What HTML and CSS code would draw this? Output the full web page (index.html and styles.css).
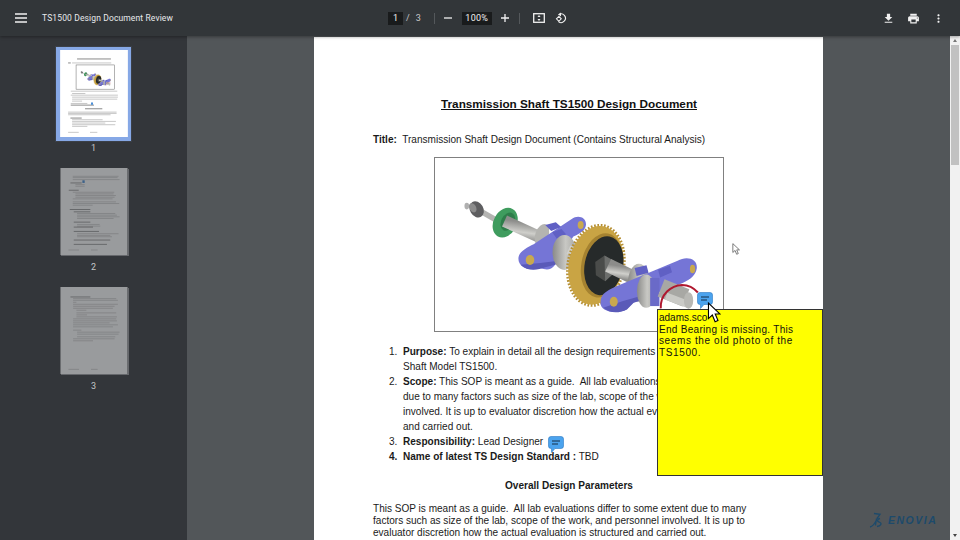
FILE: index.html
```html
<!DOCTYPE html>
<html lang="en">
<head>
<meta charset="utf-8">
<title>TS1500 Design Document Review</title>
<link rel="stylesheet" href="styles.css">
</head>
<body>
<div class="viewer">
  <header class="toolbar">
    <div class="tb-left">
      <svg class="ico menu" viewBox="0 0 12 10"><path d="M0 1h12M0 5h12M0 9h12"/></svg>
      <span class="doc-title">TS1500 Design Document Review</span>
    </div>
    <div class="tb-center">
      <span class="field field-page">1</span>
      <span class="sep-slash">/</span>
      <span class="total">3</span>
      <span class="divider"></span>
      <svg class="ico zoom-btn" viewBox="0 0 10 10"><path d="M1 5h8"/></svg>
      <span class="field field-zoom">100%</span>
      <svg class="ico zoom-btn" viewBox="0 0 10 10"><path d="M1 5h8M5 1v8"/></svg>
      <span class="divider"></span>
      <svg class="fit" viewBox="0 0 12 10"><rect x=".7" y=".7" width="10.6" height="8.6" fill="none" stroke="#f1f1f1" stroke-width="1.3"/><path d="M6 2l1.5 2h-3zM6 8L4.500 6h3z" fill="#f1f1f1"/></svg>
      <svg class="rot" viewBox="0 0 14 14"><path d="M4.200 3.200A5 5 0 1 1 4 11.200" fill="none" stroke="#f1f1f1" stroke-width="1.300"/><path d="M7 .6v4.600L3.800 3z" fill="#f1f1f1"/><path d="M4.500 5.200L7.300 8 4.500 10.800 1.700 8z" fill="none" stroke="#f1f1f1" stroke-width="1.200"/></svg>
    </div>
    <div class="tb-right">
      <svg class="act" viewBox="0 0 24 24"><path d="M19 9h-4V3H9v6H5l7 7 7-7zM5 18v2h14v-2H5z"/></svg>
      <svg class="act" viewBox="0 0 24 24"><path d="M19 8H5c-1.660 0-3 1.340-3 3v6h4v4h12v-4h4v-6c0-1.660-1.340-3-3-3zm-3 11H8v-5h8v5zm3-7c-.55 0-1-.45-1-1s.45-1 1-1 1 .45 1 1-.45 1-1 1zm-1-9H6v4h12V3z"/></svg>
      <svg class="act" viewBox="0 0 24 24"><path d="M12 8c1.100 0 2-.9 2-2s-.9-2-2-2-2 .9-2 2 .9 2 2 2zm0 2c-1.100 0-2 .9-2 2s.9 2 2 2 2-.9 2-2-.9-2-2-2zm0 6c-1.100 0-2 .9-2 2s.9 2 2 2 2-.9 2-2-.9-2-2-2z"/></svg>
    </div>
  </header>

  <div class="workspace">
    <aside class="sidebar">
      <figure class="thumb">
        <div class="thumb-frame thumb-frame-active">
          <svg class="thumb-page" viewBox="180 150 204 262">
            <rect x="180" y="150" width="204" height="262" fill="#fff"/>
            <path class="tl-b" d="M231 177h102M204 189h8"/>
            <path class="tl" d="M216 189h118M212 274h140M216 281h40M212 286h142M216 292h138M216 298h136M216 304h30M212 311h50M204 337h146M204 341h146M204 345h128M216 360h92M216 365h132M216 370h100M216 375h130M216 380h46M204 398h32M270 398h22"/>
            <path class="tl-b" d="M212 316h70M255 327h52M211 355h34"/>
            <rect x="228" y="195" width="116" height="73" fill="#fff" stroke="#666" stroke-width="1.500"/>
            <use href="#assembly" x="229" y="196" width="114" height="71"/>
            <rect x="273" y="308" width="6" height="7" fill="#4a8fd8"/>
          </svg>
        </div>
        <figcaption>1</figcaption>
      </figure>
      <figure class="thumb">
        <div class="thumb-frame">
          <svg class="thumb-page thumb-dim" viewBox="60 25 202 262">
            <rect x="60" y="25" width="202" height="262" fill="#fff"/>
            <path class="tl" d="M97 50h138M97 54h135M97 60h141M105 75h28M105 80h28M97 98h125M105 103h115M105 108h122M105 113h118M97 118h120M97 127h130M97 132h140M97 137h60M110 162h115M110 167h120M110 172h128M110 177h110M110 195h68M110 200h70M110 223h125M110 228h100M110 232h105M84 272h32M152 272h20"/>
            <path class="tl-b" d="M90 70h34M85 92h30M88 150h62M100 157h50M100 188h50M100 203h58M100 216h76M100 242h110M100 255h100"/>
            <rect x="126" y="62" width="7" height="8" fill="#4a8fd8"/>
          </svg>
        </div>
        <figcaption>2</figcaption>
      </figure>
      <figure class="thumb">
        <div class="thumb-frame">
          <svg class="thumb-page thumb-dim" viewBox="60 380 202 262">
            <rect x="60" y="380" width="202" height="262" fill="#fff"/>
            <path class="tl" d="M98 415h130M98 420h135M98 426h10M98 432h135M98 438h125M98 444h120M108 450h30M108 458h120M108 464h32M108 470h122M98 476h130M98 482h132M98 488h110M98 494h135M98 500h120M98 510h25M110 516h128M110 522h125M110 530h115M98 536h125M98 542h60M84 628h32M152 628h20"/>
            <path class="tl-b" d="M90 410h60"/>
          </svg>
        </div>
        <figcaption>3</figcaption>
      </figure>
    </aside>

    <main class="stage">
      <article class="page">
        <h1 class="doc-heading">Transmission Shaft TS1500 Design Document</h1>
        <p class="doc-title-line"><b>Title:</b>&nbsp; Transmission Shaft Design Document (Contains Structural Analysis)</p>
        <div class="figure-box">
          <svg class="assembly-svg" viewBox="12 8 870 522">
            <symbol id="assembly" viewBox="12 8 870 522">
              <defs>
                <linearGradient id="steel" x1="0.3" y1="0" x2="0" y2="1">
                  <stop offset="0" stop-color="#8c8c8a"/><stop offset=".55" stop-color="#cfcfcb"/><stop offset="1" stop-color="#8e8e8c"/>
                </linearGradient>
                <linearGradient id="hub" x1="0" y1="0" x2="1" y2="0">
                  <stop offset="0" stop-color="#8a8a88"/><stop offset=".55" stop-color="#c8c8c4"/><stop offset="1" stop-color="#a8a8a4"/>
                </linearGradient>
              </defs>
              <!-- nut and thin shaft -->
              <path d="M135 160L200 197" stroke="#b4b4b2" stroke-width="17"/>
              <ellipse cx="138" cy="163" rx="20" ry="26" fill="#5e5e60" transform="rotate(-30 138 163)"/>
              <ellipse cx="126" cy="158" rx="10" ry="15" fill="#8c8c8c" transform="rotate(-30 126 158)"/>
              <ellipse cx="108" cy="153" rx="7" ry="10" fill="#b0b0b0"/>
              <!-- green ring -->
              <ellipse cx="224" cy="203" rx="35" ry="47" fill="#3f9c5e" transform="rotate(28 224 203)"/>
              <ellipse cx="232" cy="200" rx="20" ry="29" fill="#2e7d4a" transform="rotate(28 232 200)"/>
              <!-- long shaft -->
              <path d="M222 198L335 250" stroke="url(#steel)" stroke-width="36"/>
              <ellipse cx="335" cy="240" rx="20" ry="34" fill="#b4b4b0" transform="rotate(20 335 240)"/>
              <!-- rear flange -->
              <path d="M264 312C264 290 290 278 310 268L425 192C445 178 470 188 468 210C466 228 450 235 430 245L375 330C360 350 345 345 330 340C300 350 264 340 264 312Z" fill="#7575d6"/>
              <path d="M345 210l32-8 16 14-30 12zM366 232l28-10 14 16-28 14z" fill="#6060c4"/>
              <path d="M270 330C290 350 320 348 345 338L375 330L385 318L330 325Z" fill="#5a5ab8"/>
              <ellipse cx="299" cy="316" rx="13" ry="15" fill="#c9a94e"/>
              <ellipse cx="452" cy="210" rx="9" ry="12" fill="#c9a94e"/>
              <ellipse cx="403" cy="293" rx="36" ry="53" fill="url(#hub)"/>
              <path d="M415 285L470 310" stroke="#d0d0cc" stroke-width="28"/>
              <!-- gear -->
              <ellipse cx="498" cy="332" rx="84" ry="122" fill="none" stroke="#b58f34" stroke-width="9" stroke-dasharray="5 5" transform="rotate(11 498 332)"/>
              <ellipse cx="498" cy="332" rx="82" ry="120" fill="#c9a444" transform="rotate(11 498 332)"/>
              <ellipse cx="516" cy="332" rx="62" ry="98" fill="#a58230" transform="rotate(11 516 332)"/>
              <ellipse cx="522" cy="333" rx="58" ry="90" fill="#262a2a" transform="rotate(11 522 333)"/>
              <path d="M496 322l28-20 28 16 4 34-30 28-28-18z" fill="#4a4c4a"/>
              <path d="M524 302l28 16 4 34-30 28z" fill="#6c6e6c"/>
              <!-- front shaft -->
              <path d="M535 332L610 368" stroke="url(#steel)" stroke-width="42"/>
              <ellipse cx="628" cy="385" rx="33" ry="58" fill="url(#hub)"/>
              <!-- front flange -->
              <path d="M512 442C512 415 540 405 560 395L745 318C770 303 805 310 803 340C800 360 785 375 760 385L610 445L590 465C560 482 508 472 512 442Z" fill="#7575d6"/>
              <path d="M520 460C545 480 570 475 592 465L612 445L660 430L650 420L580 440Z" fill="#5a5ab8"/>
              <path d="M615 340l36-8 6 22-36 10zM686 345l36-12 6 20-36 16z" fill="#6060c4"/>
              <ellipse cx="552" cy="442" rx="12" ry="15" fill="#c9a94e"/>
              <ellipse cx="790" cy="343" rx="8" ry="13" fill="#c9a94e"/>
              <ellipse cx="650" cy="410" rx="28" ry="50" fill="url(#hub)"/>
              <path d="M662 370h28v85h-28z" fill="#6a6ac8"/>
              <path d="M695 400L770 430" stroke="#a8a8a4" stroke-width="56"/>
              <path d="M710 425L782 452" stroke="#cacac6" stroke-width="22"/>
              <ellipse cx="778" cy="438" rx="14" ry="25" fill="#b8b8b4"/>
              <!-- markup -->
              <path d="M694 462C692 420 725 392 758 391C780 391 796 402 806 414" fill="none" stroke="#b0182f" stroke-width="6"/>
            </symbol>
            <use href="#assembly" x="12" y="8" width="870" height="522"/>
          </svg>
        </div>
        <ol class="doc-list">
          <li><b>Purpose:</b> To explain in detail all the design requirements<br>Shaft Model TS1500.</li>
          <li><b>Scope:</b> This SOP is meant as a guide.&nbsp; All lab evaluations<br>due to many factors such as size of the lab, scope of the w<br>involved. It is up to evaluator discretion how the actual ev<br>and carried out.</li>
          <li><b>Responsibility:</b> Lead Designer</li>
          <li class="li-bold"><b>Name of latest TS Design Standard :</b> <span class="plain">TBD</span></li>
        </ol>
        <h2 class="section-heading">Overall Design Parameters</h2>
        <p class="doc-para">This SOP is meant as a guide.&nbsp; All lab evaluations differ to some extent due to many<br>factors such as size of the lab, scope of the work, and personnel involved. It is up to<br>evaluator discretion how the actual evaluation is structured and carried out.</p>

        <svg class="comment comment-list" viewBox="0 0 16 17"><path d="M3 .5h10a2.500 2.500 0 0 1 2.500 2.500v7a2.500 2.500 0 0 1-2.500 2.500H7L3.500 16.500V12.500H3A2.500 2.500 0 0 1 .5 10V3A2.500 2.500 0 0 1 3 .5z" fill="#4ba3ee" stroke="#2b78c4" stroke-width=".6"/><path d="M4 5h8M4 8h6" stroke="#123" stroke-width=".9"/></svg>

        <div class="note">
          <div class="note-author">adams.sco</div>
          <div class="note-l1">End Bearing is missing. This</div>
          <div class="note-l2">seems the old photo of the</div>
          <div class="note-l2">TS1500.</div>
        </div>
        <svg class="comment comment-photo" viewBox="0 0 16 17"><path d="M3 .5h10a2.500 2.500 0 0 1 2.500 2.500v7a2.500 2.500 0 0 1-2.500 2.500H7L3.500 16.500V12.500H3A2.500 2.500 0 0 1 .5 10V3A2.500 2.500 0 0 1 3 .5z" fill="#4ba3ee" stroke="#2b78c4" stroke-width=".6"/><path d="M4 5h8M4 8h6" stroke="#123" stroke-width=".9"/></svg>
        <svg class="cursor cursor-big" viewBox="0 0 12 19"><path d="M1 1v14l3.500-3.200 2.500 6 2.600-1.100-2.500-5.800H11.500z" fill="#fff" stroke="#000" stroke-width="1"/></svg>
        <svg class="cursor cursor-small" viewBox="0 0 12 19"><path d="M1 1v14l3.500-3.200 2.500 6 2.600-1.100-2.500-5.800H11.500z" fill="#fff" stroke="#555" stroke-width="1.200"/></svg>
      </article>
      <div class="brand">
        <svg class="brand-mark" viewBox="0 0 16 16"><path d="M5 1.500l6 .8-3 4.200M7.500 6.500l-1 7M1 15c2.500-.5 4.500-2.800 6.500-7M11 6.500c-3 .5-3.500 3 0 4 2 .8 1 3.500-3 4" fill="none" stroke="#1d4a6b" stroke-width="1.300"/></svg>
        <span class="brand-name">ENOVIA</span>
      </div>
    </main>

    <div class="scrollbar">
      <span class="arrow arrow-up"></span>
      <span class="sb-thumb"></span>
      <span class="arrow arrow-down"></span>
    </div>
  </div>
</div>
</body>
</html>
```
FILE: styles.css
```css
* { box-sizing: border-box; }
html, body { margin: 0; padding: 0; height: 100%; overflow: hidden; }
body { background: #525659; font-family: "Liberation Sans", Arial, sans-serif; }

.viewer { display: flex; flex-direction: column; width: 960px; height: 540px; }

/* toolbar */
.toolbar {
  flex: 0 0 36px;
  display: grid;
  grid-template-columns: 388px auto 1fr;
  align-items: center;
  background: #323639;
  color: #f1f1f1;
  position: relative;
  z-index: 2;
  box-shadow: 0 1px 3px rgba(0,0,0,.35);
}
.tb-left { display: flex; align-items: center; padding-left: 15px; }
.ico { fill: none; stroke: #f1f1f1; stroke-width: 1.300; }
.menu { width: 12px; height: 10px; margin-right: 15px; }
.doc-title { font: 400 8.500px Roboto, sans-serif; letter-spacing: .13px; color: #e8eaed; white-space: nowrap; }

.tb-center { display: flex; align-items: center; font: 9px Roboto, sans-serif; }
.field { display: flex; align-items: center; justify-content: center; height: 13px; background: #191b1c; color: #f1f1f1; }
.field-page { width: 15px; }
.field-zoom { width: 30px; letter-spacing: .3px; }
.sep-slash { margin-left: 3px; color: #c8c8c8; }
.total { margin-left: 6px; color: #c8c8c8; }
.divider { width: 1px; height: 11px; background: #54585b; }
.total + .divider { margin: 0 8px 0 13px; }
.zoom-btn { width: 10px; height: 10px; margin: 0 9px 0 0; }
.field-zoom + .zoom-btn { margin: 0 0 0 8px; }
.field-zoom + .zoom-btn + .divider { margin: 0 13px 0 9px; }
.fit { width: 12px; height: 10px; margin-right: 10px; }
.rot { width: 12px; height: 12px; }

.tb-right { display: flex; justify-content: flex-end; align-items: center; gap: 12px; padding-right: 15px; }
.act { width: 13px; height: 13px; fill: #f1f1f1; }

/* workspace */
.workspace { flex: 1; display: flex; min-height: 0; }
.sidebar {
  flex: 0 0 187px;
  background: #33363a;
  display: flex;
  flex-direction: column;
  align-items: center;
  padding-top: 11px;
}
.thumb { margin: 0 0 15px; display: flex; flex-direction: column; align-items: center; }
.thumb-frame { width: 68px; height: 87px; box-shadow: 1px 1px 0 #66686c; }
.thumb-frame-active { width: 75px; height: 94px; margin-bottom: -5px; padding: 3px 3.500px 3px; background: #86a8e6; box-shadow: 0 0 0 1px #3b4048; }
.thumb-page { display: block; width: 68px; height: 87px; filter: blur(.45px); }
.thumb-dim { opacity: .5; }
.tl { fill: none; stroke: #666; stroke-width: 1.100; }
.tl-b { fill: none; stroke: #222; stroke-width: 1.600; }
.thumb-dim .tl { stroke: #888; }
.thumb-dim .tl-b { stroke: #444; }
.thumb figcaption { margin-top: 7px; font: 9px/10px Roboto, sans-serif; color: #c4c6c8; }

/* stage */
.stage { flex: 1; display: flex; justify-content: center; position: relative; overflow: hidden; background: #525659; padding-top: 1px; }
.page {
  position: relative;
  flex: 0 0 509px;
  width: 509px;
  min-width: 0;
  height: 660px;
  background: #fff;
  color: #1a1a1a;
  padding: 60px 58px 0 59px;
  font-size: 10.050px;
  line-height: 15px;
}
.doc-heading { margin: 0; font-size: 11.750px; line-height: 14px; text-align: center; text-decoration: underline; font-weight: bold; color: #111; }
.doc-title-line { margin: 22px 0 0; line-height: 14px; white-space: nowrap; }
.figure-box { width: 290px; height: 175px; margin: 10px 0 0 61px; border: 1px solid #808080; }
.assembly-svg { display: block; width: 100%; height: 100%; }
.doc-list { margin: 12px 0 0; padding: 0 0 0 30px; white-space: nowrap; list-style: none; counter-reset: item; }
.doc-list li { position: relative; counter-increment: item; }
.doc-list li::before { content: counter(item) "."; position: absolute; left: -14px; }
.doc-list .li-bold::before { font-weight: bold; }
.section-heading { margin: 14px 0 0; font-size: 10.050px; line-height: 15px; font-weight: bold; text-align: center; }
.doc-para { margin: 10px 0 0; line-height: 12px; white-space: nowrap; }

.note {
  position: absolute;
  top: 272px;
  right: 0;
  width: 166px;
  height: 167px;
  background: #ffff00;
  border: 1px solid #333;
  padding: 2px 1px;
  font-size: 10px;
  line-height: 11.500px;
  color: #111;
}
.note-l1 { letter-spacing: .3px; }
.note-l2 { letter-spacing: .62px; }
.comment { position: absolute; width: 16px; height: 17px; }
.comment-list { left: 234px; top: 399px; }
.comment-photo { left: 383px; top: 255px; }
.cursor { position: absolute; }
.cursor-big { left: 393px; top: 265px; width: 14px; height: 21px; }
.cursor-small { left: 418px; top: 206px; width: 8px; height: 12px; }

.brand { position: absolute; left: 682px; top: 476px; display: flex; align-items: center; gap: 3px; }
.brand-mark { width: 16px; height: 16px; }
.brand-name { font: italic bold 10.500px "Liberation Sans", sans-serif; letter-spacing: 1.500px; color: #1d4a6b; }

/* scrollbar */
.scrollbar { flex: 0 0 10px; display: flex; flex-direction: column; align-items: center; background: #f1f1f1; padding: 3px 0 3px; }
.sb-thumb { width: 8px; height: 120px; margin-top: 3px; background: #c1c1c1; }
.arrow { width: 0; height: 0; border-left: 2.500px solid transparent; border-right: 2.500px solid transparent; }
.arrow-up { border-bottom: 3px solid #777; }
.arrow-down { margin-top: auto; border-top: 3px solid #444; }
```
